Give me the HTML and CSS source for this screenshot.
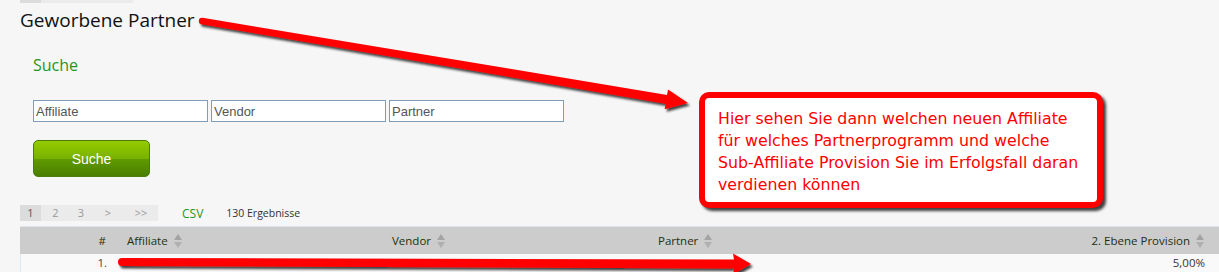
FILE: index.html
```html
<!DOCTYPE html>
<html lang="de">
<head>
  <meta charset="UTF-8">
  <title>Geworbene Partner</title>
  <link rel="stylesheet" href="styles.css">
</head>
<body>
  <div class="top-strip"><span></span></div>

  <h1>Geworbene Partner</h1>

  <div class="search">
    <h2>Suche</h2>
    <div class="fields">
      <input type="text" placeholder="Affiliate">
      <input type="text" placeholder="Vendor">
      <input type="text" placeholder="Partner">
    </div>
    <button class="btn">Suche</button>
  </div>

  <div class="toolbar">
    <div class="pager">
      <span class="current">1</span>
      <span class="p2">2</span>
      <span class="p3">3</span>
      <span class="next">&gt;</span>
      <span class="last">&gt;&gt;</span>
    </div>
    <a class="csv">CSV</a>
    <span class="count">130 Ergebnisse</span>
  </div>

  <div class="table">
    <div class="row head">
      <div class="cell num">#</div>
      <div class="cell">Affiliate <i class="sort"></i></div>
      <div class="cell">Vendor <i class="sort"></i></div>
      <div class="cell">Partner <i class="sort"></i></div>
      <div class="cell right">2. Ebene Provision <i class="sort"></i></div>
    </div>
    <div class="row">
      <div class="cell num">1.</div>
      <div class="cell"></div>
      <div class="cell"></div>
      <div class="cell"></div>
      <div class="cell right">5,00%</div>
    </div>
  </div>

  <!-- annotation overlay -->
  <div class="callout">
    Hier sehen Sie dann welchen neuen Affiliate<br>
    für welches Partnerprogramm und welche<br>
    Sub-Affiliate Provision Sie im Erfolgsfall daran<br>
    verdienen können
  </div>

  <svg class="arrows" width="1219" height="272" viewBox="0 0 1219 272">
    <defs>
      <filter id="shadow" x="-10%" y="-50%" width="120%" height="200%">
        <feDropShadow dx="2" dy="2.5" stdDeviation="1.3" flood-color="#000" flood-opacity="0.75"/>
      </filter>
    </defs>
    <g fill="#ff0000" filter="url(#shadow)">
      <circle cx="202" cy="21" r="3.2"/>
      <polygon points="201.5,24.2 202.5,17.8 667,94.9 668,89.5 688,103 664.6,109.2 665.6,103.7"/>
      <circle cx="122" cy="262" r="4"/>
      <polygon points="122,258 734,259.5 733,253.5 751,264 733,274.5 734,268.5 122,266"/>
    </g>
  </svg>
</body>
</html>
```

FILE: styles.css
```css
body {
  margin: 0;
  background: #f6f6f6;
  font-family: "Open Sans", Arial, sans-serif;
  color: #222;
  position: relative;
  overflow: hidden;
}

.top-strip {
  margin-left: 20px;
  width: 113px;
  height: 3px;
  background: #ebebeb;
}

.top-strip span {
  display: block;
  width: 21px;
  height: 3px;
  background: #dcdcdc;
}

h1 {
  margin: 4px 0 0 20px;
  font-size: 19px;
  font-weight: normal;
  line-height: 26px;
  color: #111;
}

.search {
  padding-left: 33px;
}

h2 {
  margin: 21px 0 0;
  font-size: 16px;
  font-weight: normal;
  line-height: 22px;
  color: #1e961e;
}

.fields {
  display: flex;
  gap: 3px;
  margin-top: 24px;
}

.fields input {
  box-sizing: border-box;
  width: 175px;
  height: 22px;
  margin: 0;
  padding: 0 2px;
  border: 1px solid #7f9db9;
  background: #fff;
  font-family: Arial, sans-serif;
  font-size: 13px;
}

.fields input::placeholder {
  color: #555;
}

.btn {
  display: block;
  box-sizing: border-box;
  width: 117px;
  height: 37px;
  margin-top: 18px;
  border: 1px solid #4c7d0a;
  border-radius: 5px;
  background: linear-gradient(#94cb00, #78b200 50%, #609a00 52%, #4a7f00);
  color: #fff;
  font-family: Arial, sans-serif;
  font-size: 14px;
  cursor: pointer;
}

.toolbar {
  display: flex;
  align-items: center;
  margin: 28px 0 0 20px;
  height: 16px;
  font-size: 11px;
}

.pager {
  display: flex;
  height: 16px;
  width: 138px;
  background: #ebebeb;
  color: #999;
  line-height: 16px;
}

.pager span {
  text-align: center;
}

.pager .current {
  width: 21px;
  background: #dcdcdc;
  color: #555;
}

.pager .p2 { width: 29px; }
.pager .p3 { width: 22px; }
.pager .next { width: 32px; }
.pager .last { width: 34px; }

.csv {
  margin-left: 24px;
  color: #1e961e;
  font-size: 12px;
}

.count {
  margin-left: 23px;
  color: #333;
  font-size: 10.5px;
}

.table {
  margin: 5px 0 0 20px;
  border-top: 1px solid #dfe5ee;
  font-size: 11.5px;
}

.row {
  display: grid;
  grid-template-columns: 92px 265px 266px 266px 1fr;
  height: 18px;
  line-height: 18px;
  background: #f9f9f9;
  border-left: 1px solid #e2e8f0;
}

.row.head {
  height: 27px;
  line-height: 27px;
  background: #cccccc;
  border-left: none;
  color: #22310f;
}

.cell {
  padding-left: 15px;
  white-space: nowrap;
}

.cell.num {
  padding: 0 6px 0 0;
  text-align: right;
  color: #444;
}

.head .cell.num {
  color: #22310f;
}

.cell.right {
  text-align: right;
  padding: 0 14px 0 0;
  color: #333;
}

.head .cell.right {
  color: #22310f;
}

.sort {
  display: inline-block;
  position: relative;
  width: 9px;
  height: 14px;
  margin-left: 3px;
  vertical-align: -3px;
}

.sort::before,
.sort::after {
  content: "";
  position: absolute;
  left: 0;
  border-left: 4.5px solid transparent;
  border-right: 4.5px solid transparent;
}

.sort::before {
  top: 0;
  border-bottom: 6px solid #a3a3a3;
}

.sort::after {
  bottom: 0;
  border-top: 6px solid #b0b0b0;
}

.callout {
  position: absolute;
  left: 699px;
  top: 92px;
  box-sizing: border-box;
  width: 404px;
  height: 116px;
  padding: 10px 6px 0 13px;
  border: 6px solid #ff0000;
  border-radius: 10px;
  background: #fff;
  box-shadow: 3px 3px 3px rgba(0, 0, 0, 0.75);
  color: #ff0000;
  font-family: "DejaVu Sans", sans-serif;
  font-size: 15.8px;
  line-height: 22px;
  white-space: nowrap;
}

.arrows {
  position: absolute;
  left: 0;
  top: 0;
  pointer-events: none;
}
```
